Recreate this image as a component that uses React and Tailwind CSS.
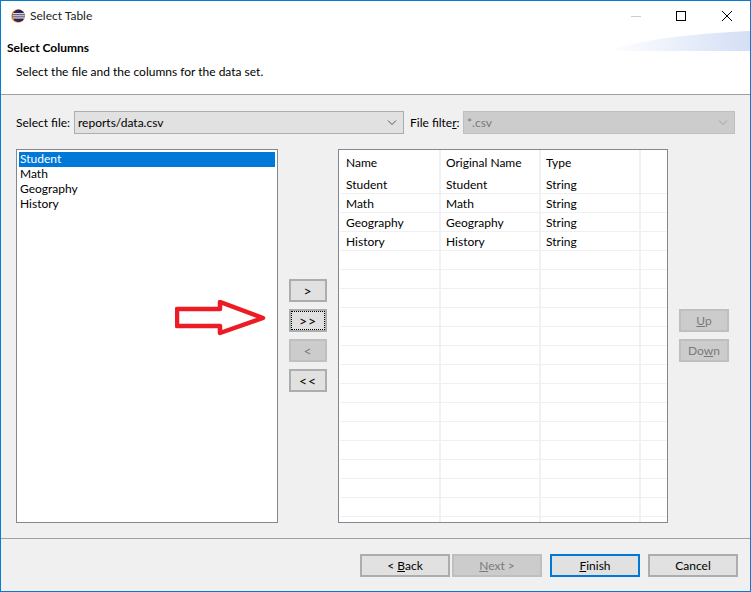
import React from "react";

const columns = ["Student", "Math", "Geography", "History"];
const emptyRows = Array.from({ length: 14 });

const Cell = ({ text, head }) => (
    <div className={`w-[100px] h-full pl-[5px] border-r-2 border-[#f0f0f5] ${head ? "leading-[26px]" : "pt-[2px] leading-[16px]"}`}>{text}</div>
);

const Row = ({ name, original, type }) => (
    <div className="flex h-[19px] pl-px border-b border-[#f0f0f0]">
        <Cell text={name} />
        <Cell text={original} />
        <Cell text={type} />
    </div>
);

const MoveButton = ({ label, disabled, focused }) => (
    <button
        className={`w-[38px] h-[23px] border-2 flex items-center justify-center text-[14px] tracking-[1px] ${
            disabled ? "bg-[#cccccc] border-[#bfbfbf] text-[#7a7a7a]" : "bg-[#e1e1e1] border-[#adadad] text-black"
        }`}
    >
        <span className={`w-[34px] h-[19px] flex items-center justify-center leading-none ${focused ? "border border-dotted border-black" : ""}`}>{label}</span>
    </button>
);

const FooterButton = ({ children, disabled, primary }) => (
    <button
        className={`w-[90px] h-[23px] border-2 text-[12px] leading-none pt-px ${
            disabled
                ? "bg-[#cccccc] border-[#bfbfbf] text-[#7a7a7a]"
                : primary
                ? "bg-[#e1e1e1] border-[#0078d7]"
                : "bg-[#e1e1e1] border-[#adadad]"
        }`}
    >
        {children}
    </button>
);

const Chevron = ({ color }) => (
    <svg width="10" height="6" viewBox="0 0 10 6" fill="none" stroke={color}>
        <path d="M1 0.5 L5 4.5 L9 0.5" />
    </svg>
);

const EclipseIcon = () => (
    <svg width="14" height="14" viewBox="0 0 14 14">
        <circle cx="7" cy="7" r="6.8" fill="#f7941e" />
        <circle cx="7.6" cy="6.8" r="6.2" fill="#2c2255" />
        <rect x="2" y="4.2" width="11.6" height="1.1" fill="#fff" />
        <rect x="1.5" y="6.3" width="12.2" height="1.1" fill="#fff" />
        <rect x="2" y="8.4" width="11.6" height="1.1" fill="#fff" />
    </svg>
);

export default function App() {
    return (
        <div className="w-[751px] h-[592px] flex flex-col border border-[#0a7ad1] bg-[#f0f0f0] text-[12px] text-black overflow-hidden" style={{ fontFamily: 'Lato, sans-serif' }}>
            {/* title bar and banner */}
            <div className="relative h-[94px] bg-white border-b border-[#a0a0a0] shrink-0">
                <div className="flex items-center h-[30px] pl-[10px]">
                    <EclipseIcon />
                    <span className="ml-[5px] text-[#222]">Select Table</span>
                    <div className="ml-auto flex items-center">
                        <div className="w-[10px] h-px bg-[#cccccc] mr-[35px]"></div>
                        <div className="w-[10px] h-[10px] border border-black mr-[36px]"></div>
                        <svg width="10" height="10" viewBox="0 0 10 10" stroke="#000" className="mr-[18px]">
                            <path d="M0 0 L10 10 M10 0 L0 10" />
                        </svg>
                    </div>
                </div>
                <svg width="142" height="20" viewBox="0 0 142 20" className="absolute right-0 top-[30px]">
                    <defs>
                        <linearGradient id="banner" x1="0" x2="1" y1="0" y2="0">
                            <stop offset="0" stopColor="#ffffff" />
                            <stop offset="1" stopColor="#d4dff5" />
                        </linearGradient>
                    </defs>
                    <path d="M0 20 C30 9 80 3 142 0 L142 20 Z" fill="url(#banner)" />
                </svg>
                <h1 className="pl-[6px] mt-[8px] font-bold leading-[18px]">Select Columns</h1>
                <p className="pl-[15px] mt-[6px] leading-[18px]">Select the file and the columns for the data set.</p>
            </div>

            {/* content */}
            <div className="flex-1 flex flex-col px-[15px] pt-[16px] min-h-0">
                <div className="flex items-center h-[23px]">
                    <span className="w-[58px]">Select f<u>i</u>le:</span>
                    <div className="w-[330px] h-[23px] bg-[#e1e1e1] border border-[#adadad] flex items-center pl-[3px] pr-[6px] justify-between">
                        <span>reports/data.csv</span>
                        <Chevron color="#555" />
                    </div>
                    <span className="ml-[6px] w-[53px]">File filte<u>r</u>:</span>
                    <div className="w-[272px] h-[23px] bg-[#cccccc] border border-[#bfbfbf] flex items-center pl-[3px] pr-[6px] justify-between text-[#7a7a7a]">
                        <span>*.csv</span>
                        <Chevron color="#a0a0a0" />
                    </div>
                </div>

                <div className="relative flex mt-[15px] h-[374px]">
                    <div className="w-[262px] h-full bg-white border border-[#828790] p-[2px]">
                        {columns.map((name, i) => (
                            <div key={name} className={`h-[15px] pl-px leading-[14px] ${i === 0 ? "bg-[#0078d7] text-white" : ""}`}>{name}</div>
                        ))}
                    </div>

                    <div className="w-[60px] pb-px flex flex-col items-center justify-center gap-[7px]">
                        <MoveButton label=">" />
                        <MoveButton label=">>" focused />
                        <MoveButton label="<" disabled />
                        <MoveButton label="<<" />
                    </div>

                    <div className="w-[330px] h-full bg-white border border-[#828790] pl-px overflow-hidden">
                        <div className="flex h-[25px] pl-px">
                            <Cell head text="Name" />
                            <Cell head text="Original Name" />
                            <Cell head text="Type" />
                        </div>
                        {columns.map((name) => (
                            <Row key={name} name={name} original={name} type="String" />
                        ))}
                        {emptyRows.map((_, i) => (
                            <Row key={i} />
                        ))}
                        <div className="flex h-[5px] pl-px">
                            <Cell />
                            <Cell />
                            <Cell />
                        </div>
                    </div>

                    <div className="ml-[11px] pb-px flex flex-col justify-center gap-[7px] text-[#7a7a7a]">
                        <div className="w-[50px] h-[23px] bg-[#cccccc] border-2 border-[#bfbfbf] flex items-center justify-center"><span><u>U</u>p</span></div>
                        <div className="w-[50px] h-[23px] bg-[#cccccc] border-2 border-[#bfbfbf] flex items-center justify-center"><span>Do<u>w</u>n</span></div>
                    </div>

                    <svg width="94" height="38" viewBox="0 0 94 38" className="absolute left-[159px] top-[151px]">
                        <path d="M2 9 H45 V2 L88 18 L45 33 V26 H2 Z" fill="#fff" stroke="#ed1c24" strokeWidth="4.5" strokeLinejoin="round" />
                    </svg>
                </div>
            </div>

            {/* footer */}
            <div className="h-[53px] shrink-0 border-t border-[#a0a0a0] flex items-start pt-[15px] pl-[359px]">
                <FooterButton>&lt; <u>B</u>ack</FooterButton>
                <div className="ml-[2px]"><FooterButton disabled><u>N</u>ext &gt;</FooterButton></div>
                <div className="ml-[8px]"><FooterButton primary><u>F</u>inish</FooterButton></div>
                <div className="ml-[8px]"><FooterButton>Cancel</FooterButton></div>
            </div>
        </div>
    );
}
